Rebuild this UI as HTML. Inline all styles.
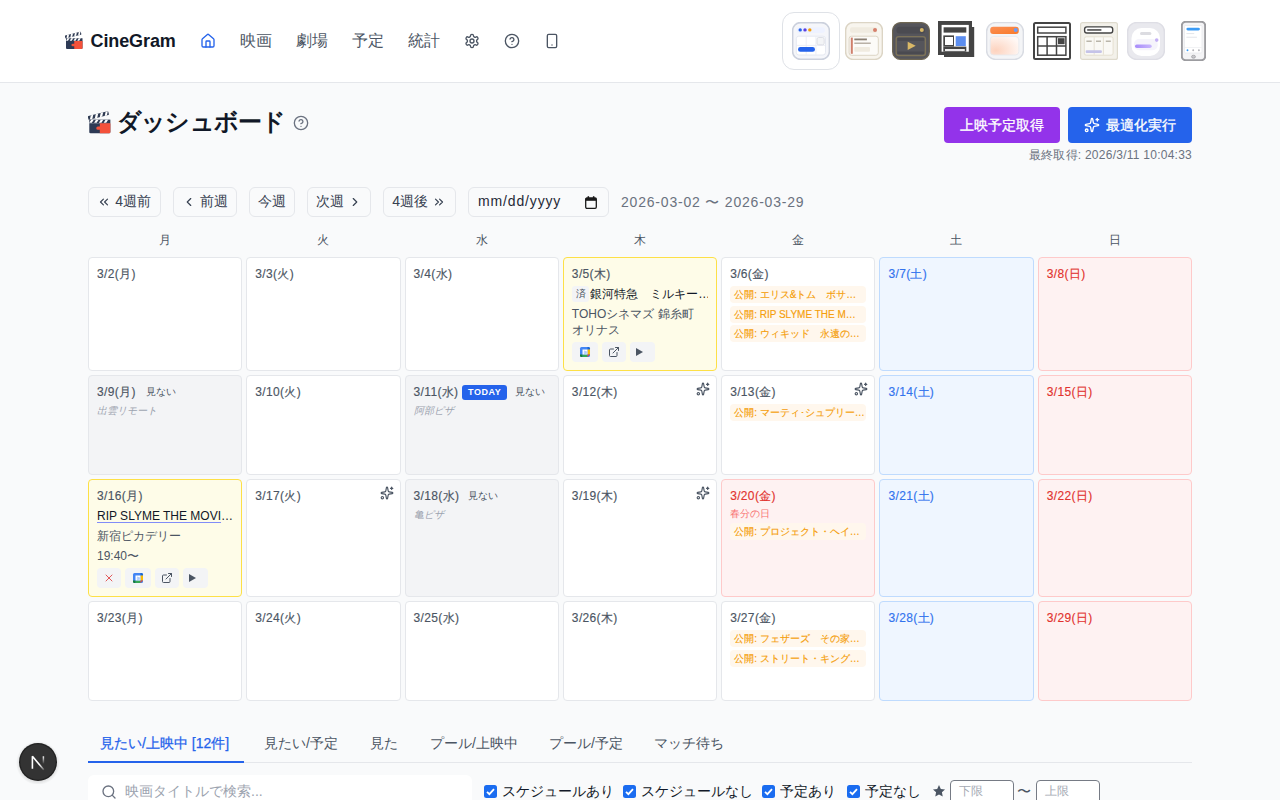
<!DOCTYPE html>
<html lang="ja">
<head>
<meta charset="utf-8">
<title>CineGram</title>
<style>
*{box-sizing:border-box;margin:0;padding:0}
html,body{width:1280px;height:800px;overflow:hidden}
body{font-family:"Liberation Sans",sans-serif;background:#f9fafb;color:#111827;position:relative;font-size:14px;line-height:1.5}
svg{display:block}
.ic{fill:none;stroke:currentColor;stroke-width:2;stroke-linecap:round;stroke-linejoin:round}
/* header */
#hdr{position:absolute;left:0;top:0;width:1280px;height:83px;background:#fff;border-bottom:1px solid #e5e7eb}
#logo{position:absolute;left:65px;top:27px;height:28px;display:flex;align-items:center;font-weight:700;font-size:18px;color:#111827;white-space:nowrap;letter-spacing:-.1px}
#logo svg{margin-right:7.500px}
#nav{position:absolute;left:200px;top:0;height:82px;display:flex;align-items:center;gap:24px;color:#4b5563;font-size:16px;white-space:nowrap}
#nav .act{color:#2563eb}
#nav span{width:32px;flex:none;overflow:visible}
#nav svg{flex:none}
.d span{flex:none;white-space:nowrap}
.th{position:absolute;top:22px;width:38px;height:38px}
#thsel{position:absolute;left:782px;top:12px;width:58px;height:58px;border:1px solid #dfe2e7;border-radius:12px;background:#fff}
/* title */
#ttl{position:absolute;left:87px;top:104px;height:36px;display:flex;align-items:center;font-size:24px;font-weight:700;color:#111827;white-space:nowrap;letter-spacing:-.8px}
#ttlhelp{position:absolute;left:293px;top:115px;color:#6b7280}
.btn{position:absolute;top:107px;height:36px;border-radius:4px;color:#fff;font-size:14px;-webkit-text-stroke:.3px #fff;display:flex;align-items:center;justify-content:center;white-space:nowrap}
#b1{left:944px;width:116px;background:#9333ea}
#b2{left:1068px;width:124px;background:#2563eb}
#b2 svg{margin-right:6px}
#last{position:absolute;right:88px;top:147px;font-size:12px;line-height:16px;color:#6b7280;white-space:nowrap;letter-spacing:.25px}
/* week nav */
.nb{position:absolute;top:187px;height:29.500px;border:1px solid #e5e7eb;border-radius:6px;color:#374151;font-size:14px;display:flex;align-items:center;justify-content:center;white-space:nowrap;gap:4px;padding:0 8px}
.nb svg{flex:none}
#range{position:absolute;left:621px;top:192px;font-size:14px;line-height:20px;color:#6b7280;white-space:nowrap;letter-spacing:.8px}
/* calendar */
.dow{position:absolute;top:231px;width:154px;text-align:center;font-size:12px;line-height:18px;color:#4b5563}
.c{position:absolute;border:1px solid #e5e7eb;border-radius:4px;background:#fff;padding:8px;overflow:hidden}
.c>*+*{margin-top:4px}
.c .d{font-size:12px;line-height:16px;height:16px;color:#4b5563;white-space:nowrap;display:flex;align-items:center;-webkit-text-stroke:.15px currentColor;letter-spacing:.35px}
.sat{background:#eff6ff;border-color:#bfdbfe}
.sat .d{color:#3173ee}
.sun{background:#fef2f2;border-color:#fecaca}
.sun .d{color:#e2332f}
.gry{background:#f3f4f6;border-color:#e5e7eb}
.yel{background:#fefce8;border-color:#fde047}
.c .sp{position:absolute;right:6px;top:6px;color:#4b5563;margin:0}
.rel{height:17px;border-radius:4px;background:#fff7ed;color:#f59e0b;font-size:10px;line-height:17px;padding:0 0 0 4px;white-space:nowrap;overflow:hidden;-webkit-text-stroke:.15px currentColor}
.c>.rel+.rel{margin-top:2.500px}
.nw{font-size:10px;color:#4b5563;margin-left:8px;-webkit-text-stroke:0;letter-spacing:0}
.today{margin-left:4px;background:#2563eb;color:#fff;font-size:9px;font-weight:700;line-height:15px;height:15px;padding:0 6px;border-radius:3px;letter-spacing:.6px;-webkit-text-stroke:0}
.memo{font-size:10px;line-height:14px;color:#9ca3af;font-style:italic;white-space:nowrap}
.hol{font-size:10px;line-height:14px;color:#f87171;white-space:nowrap}
.c>.hol{margin-top:3px}
.c>.hol+.rel{margin-top:2px}
.mv{font-size:12px;line-height:16px;color:#111827;white-space:nowrap;overflow:hidden}
.mv u{text-decoration-color:#818cf8;text-underline-offset:2px}
.sumi{display:inline-block;width:17.500px;height:15.500px;line-height:16px;margin-right:1px;border-radius:3px;background:#f3f4f6;color:#4b5563;font-size:10px;text-align:center;vertical-align:top}
.thr{font-size:12px;line-height:16px;color:#4b5563}
.acts{display:flex;gap:4px}
.ab{width:24px;height:20px;border-radius:4px;background:#f3f4f6;display:flex;align-items:center;justify-content:center;color:#4b5563}
/* tabs */
#tabs{position:absolute;left:88px;top:725px;width:1104px;height:38px;border-bottom:1px solid #e5e7eb;display:flex;font-size:14px;color:#4b5563;white-space:nowrap}
#tabs div{position:absolute;top:0;margin-left:-88px;padding:8px 0 0 12px;height:38px;line-height:20px}
#tabs .on{color:#2563eb;border-bottom:2px solid #2563eb;-webkit-text-stroke:.25px currentColor}
#search{position:absolute;left:88px;top:774.500px;width:384px;height:34px;background:#fff;border-radius:6px;color:#9ca3af;font-size:14px;display:flex;align-items:center;padding-left:12.500px;white-space:nowrap}
#search svg{margin-right:8.500px}
.ck{position:absolute;top:785px;width:13px;height:13px;border-radius:2.500px;background:#1a6cf0}
.cl{position:absolute;top:780.500px;font-size:14px;line-height:20px;color:#111827;white-space:nowrap}
.ni{position:absolute;top:780px;width:64px;height:24px;border:1px solid #767b85;border-radius:4px;background:#fff;font-size:12px;color:#a4a9b3;padding-left:7.500px;line-height:21px}
#ndev{position:absolute;left:16px;top:740px}
</style>
</head>
<body>
<svg width="0" height="0" style="position:absolute">
<defs>
<symbol id="clap" viewBox="0 0 36 36">
<g transform="rotate(-14 3 14)"><rect x="1" y="7.5" width="33" height="6" rx="1.2" fill="#2e3a52"/><path d="M6 7.5h4l-3 6h-4zM14 7.5h4l-3 6h-4zM22 7.5h4l-3 6h-4zM30 7.5h3.5l-3 6h-3.5z" fill="#fff"/></g>
<rect x="2" y="13.5" width="33" height="5.5" fill="#2e3a52"/>
<path d="M5 13.5h4l-3 5h-4zM12.5 13.5h4l-3 5h-4zM20 13.5h4l-3 5h-4zM27.500 13.5h4l-3 5h-4z" fill="#fff"/>
<path d="M2 19h33v14a2 2 0 0 1-2 2H4a2 2 0 0 1-2-2z" fill="#2d3a55"/>
<path d="M18.500 19H35v14a2 2 0 0 1-2 2H18.500v-5.500h-3a2.600 2.600 0 0 1 0-5.200h3z" fill="#f4513a"/>
</symbol>
<symbol id="i-home" viewBox="0 0 24 24"><path d="M15 21v-8a1 1 0 0 0-1-1h-4a1 1 0 0 0-1 1v8"/><path d="M3 10a2 2 0 0 1 .709-1.528l7-5.999a2 2 0 0 1 2.582 0l7 5.999A2 2 0 0 1 21 10v9a2 2 0 0 1-2 2H5a2 2 0 0 1-2-2z"/></symbol>
<symbol id="i-gear" viewBox="0 0 24 24"><path d="M12.220 2h-.440a2 2 0 0 0-2 2v.180a2 2 0 0 1-1 1.730l-.430.250a2 2 0 0 1-2 0l-.150-.080a2 2 0 0 0-2.730.730l-.220.380a2 2 0 0 0 .730 2.730l.150.100a2 2 0 0 1 1 1.720v.510a2 2 0 0 1-1 1.740l-.150.090a2 2 0 0 0-.730 2.730l.220.380a2 2 0 0 0 2.730.730l.150-.080a2 2 0 0 1 2 0l.430.250a2 2 0 0 1 1 1.730V20a2 2 0 0 0 2 2h.440a2 2 0 0 0 2-2v-.180a2 2 0 0 1 1-1.730l.430-.250a2 2 0 0 1 2 0l.150.080a2 2 0 0 0 2.730-.730l.220-.390a2 2 0 0 0-.730-2.730l-.150-.080a2 2 0 0 1-1-1.740v-.500a2 2 0 0 1 1-1.740l.150-.090a2 2 0 0 0 .730-2.730l-.220-.380a2 2 0 0 0-2.730-.730l-.150.080a2 2 0 0 1-2 0l-.430-.250a2 2 0 0 1-1-1.730V4a2 2 0 0 0-2-2z"/><circle cx="12" cy="12" r="3"/></symbol>
<symbol id="i-help" viewBox="0 0 24 24"><circle cx="12" cy="12" r="10"/><path d="M9.090 9a3 3 0 0 1 5.830 1c0 2-3 3-3 3"/><path d="M12 17h.010"/></symbol>
<symbol id="i-phone" viewBox="0 0 24 24"><rect width="14" height="20" x="5" y="2" rx="2" ry="2"/><path d="M12 18h.010"/></symbol>
<symbol id="i-spark" viewBox="0 0 24 24"><path d="M11.017 2.814a1 1 0 0 1 1.966 0l1.051 5.558a2 2 0 0 0 1.594 1.594l5.558 1.051a1 1 0 0 1 0 1.966l-5.558 1.051a2 2 0 0 0-1.594 1.594l-1.051 5.558a1 1 0 0 1-1.966 0l-1.051-5.558a2 2 0 0 0-1.594-1.594l-5.558-1.051a1 1 0 0 1 0-1.966l5.558-1.051a2 2 0 0 0 1.594-1.594z"/><path d="M20 2v4"/><path d="M22 4h-4"/><circle cx="4" cy="20" r="2"/></symbol>
<symbol id="i-ext" viewBox="0 0 24 24"><path d="M15 3h6v6"/><path d="M10 14 21 3"/><path d="M18 13v6a2 2 0 0 1-2 2H5a2 2 0 0 1-2-2V8a2 2 0 0 1 2-2h6"/></symbol>
<symbol id="i-x" viewBox="0 0 24 24"><path d="M18 6 6 18"/><path d="m6 6 12 12"/></symbol>
<symbol id="i-search" viewBox="0 0 24 24"><circle cx="11" cy="11" r="8"/><path d="m21 21-4.300-4.300"/></symbol>
<symbol id="i-cll" viewBox="0 0 24 24"><path d="m11 17-5-5 5-5"/><path d="m18 17-5-5 5-5"/></symbol>
<symbol id="i-cl" viewBox="0 0 24 24"><path d="m15 18-6-6 6-6"/></symbol>
<symbol id="i-cr" viewBox="0 0 24 24"><path d="m9 18 6-6-6-6"/></symbol>
<symbol id="i-crr" viewBox="0 0 24 24"><path d="m6 17 5-5-5-5"/><path d="m13 17 5-5-5-5"/></symbol>
<symbol id="gcal" viewBox="0 0 24 24"><rect x="2" y="2" width="20" height="20" rx="3" fill="#4285f4"/><path d="M17 2h2a3 3 0 0 1 3 3v2h-5z" fill="#1967d2"/><rect x="17" y="7" width="5" height="10" fill="#fbbc04"/><rect x="7" y="17" width="10" height="5" fill="#34a853"/><path d="M2 17h5v5H5a3 3 0 0 1-3-3z" fill="#188038"/><path d="M17 17h5l-5 5z" fill="#ea4335"/><rect x="7" y="7" width="10" height="10" fill="#fff"/><path d="M9.500 14.500c.5.700 1.100 1 1.800 1 1 0 1.700-.600 1.700-1.400 0-.800-.700-1.300-1.600-1.300M11.400 12.800c.800 0 1.400-.500 1.400-1.200 0-.700-.600-1.100-1.400-1.100-.700 0-1.200.300-1.600.800M14.500 10.500v5" stroke="#4285f4" stroke-width="1" fill="none"/></symbol>
</defs>
</svg>
<div id="hdr">
<div id="logo"><svg width="18" height="19" style="margin-top:-1px"><use href="#clap"/></svg>CineGram</div>
<div id="nav">
<svg class="ic act" width="16" height="16"><use href="#i-home"/></svg>
<span>映画</span><span>劇場</span><span>予定</span><span>統計</span>
<svg class="ic" width="16" height="16"><use href="#i-gear"/></svg>
<svg class="ic" width="16" height="16"><use href="#i-help"/></svg>
<svg class="ic" width="16" height="16"><use href="#i-phone"/></svg>
</div>
<div id="thsel"></div>
<svg class="th" style="left:792px" viewBox="0 0 38 38"><rect x=".6" y=".6" width="36.800" height="36.800" rx="8" fill="#f5f6fa" stroke="#cbd0dc" stroke-width="1.600"/><rect x="4.700" y="5.200" width="28.300" height="5.800" rx="2.900" fill="#eef2ff"/><circle cx="8.200" cy="7.900" r="1.700" fill="#2563eb"/><circle cx="13" cy="7.900" r="1.700" fill="#5b3fe0"/><circle cx="17.800" cy="7.900" r="1.700" fill="#f59e0b"/><rect x="4.300" y="14.200" width="29.200" height="18.800" rx="2.500" fill="#fff" stroke="#e3e6ef" stroke-width=".9"/><path d="M14.200 14.500v18.200M23.900 14.500v18.200M4.600 23.400h28.600" stroke="#e8eaf2" stroke-width=".8"/><rect x="25" y="15.500" width="7.200" height="7.300" rx="1.600" fill="#f3f4f6" stroke="#d5d8e0" stroke-width=".8"/><rect x="6" y="25" width="17" height="4.800" rx="2.400" fill="#2563eb"/></svg>
<svg class="th" style="left:845px" viewBox="0 0 38 38"><rect x=".6" y=".6" width="36.800" height="36.800" rx="7.500" fill="#f8f5ee" stroke="#dcd5c5" stroke-width="1.500"/><rect x="5" y="5.200" width="27" height="5.500" rx="2" fill="#f0ebe0"/><circle cx="30" cy="7.900" r="2" fill="#d6806c"/><rect x="4.100" y="14.200" width="29.200" height="19.100" rx="2.500" fill="#fcfbf8" stroke="#ddd6c6" stroke-width="1"/><rect x="5.800" y="15.600" width="2" height="16.200" fill="#cf7f6b"/><rect x="9.300" y="16.500" width="12.600" height="1.800" fill="#8a7f72"/><rect x="9.300" y="20.600" width="16.500" height="1.200" fill="#a89f92"/><rect x="9.300" y="25" width="15.700" height="4.800" rx="1" fill="#f0ebe0"/></svg>
<svg class="th" style="left:892px" viewBox="0 0 38 38"><rect x=".6" y=".6" width="36.800" height="36.800" rx="8" fill="#55555b" stroke="#6f6753" stroke-width="1.200"/><rect x="4.500" y="4.700" width="28.500" height="6.800" rx="3" fill="#4b4b51"/><circle cx="29.800" cy="8.100" r="2" fill="#d9b867"/><rect x="4.200" y="14.600" width="29.200" height="18.900" rx="2.500" fill="#55555b" stroke="#7d7358" stroke-width="1.400"/><rect x="5.500" y="16" width="26.600" height="2.800" fill="#4a4a50"/><rect x="5.500" y="29.500" width="26.600" height="2.600" fill="#4a4a50"/><path d="M15.700 19.700l8 4.100-8 4.100z" fill="#d9b867"/></svg>
<svg class="th" style="left:938px;top:21px" viewBox="0 0 38 38"><rect x="6" y="6" width="30.200" height="30" fill="#444"/><rect x="0" y="0" width="34" height="34" fill="#444"/><rect x="3.600" y="3.900" width="27.200" height="26.800" fill="#fff"/><rect x="5.600" y="6.300" width="22.700" height="5.300" fill="#444"/><rect x="5.300" y="14.400" width="10.700" height="11.200" fill="#444"/><rect x="7" y="16" width="8" height="8" fill="#fff"/><rect x="17.700" y="15.200" width="10.100" height="9.800" fill="#5b8def"/><rect x="5.300" y="25.600" width="23" height="5.100" fill="#444"/><rect x="7" y="28.100" width="19.800" height="1.800" fill="#fff"/></svg>
<svg class="th" style="left:986px" viewBox="0 0 38 38"><defs><linearGradient id="g5a" x1="0" y1="0" x2="1" y2="1"><stop offset="0" stop-color="#fb8f55"/><stop offset="1" stop-color="#f97a2a"/></linearGradient><radialGradient id="g5b" cx=".2" cy=".75" r=".9"><stop offset="0" stop-color="#fdd3bf"/><stop offset="1" stop-color="#fff8f5"/></radialGradient></defs><rect x=".6" y=".6" width="36.800" height="36.800" rx="9" fill="#f4f5f7" stroke="#d9dce3" stroke-width="1.500"/><rect x="4.200" y="4.800" width="28.600" height="7.100" rx="3" fill="url(#g5a)"/><circle cx="29.700" cy="7.900" r="2" fill="#6b9cf5"/><rect x="4.200" y="14.400" width="28.600" height="18.600" rx="3.500" fill="url(#g5b)" stroke="#e6e8ed" stroke-width=".8"/></svg>
<svg class="th" style="left:1033px" viewBox="0 0 38 38"><rect x="1" y="1" width="36" height="36" rx="1.500" fill="#fff" stroke="#444" stroke-width="2"/><rect x="4.700" y="5.200" width="28.200" height="5.800" fill="#fff" stroke="#444" stroke-width="1.500"/><rect x="4.700" y="14.700" width="28.200" height="18.500" fill="#fff" stroke="#444" stroke-width="1.500"/><path d="M14.100 14.700v18.500M23.500 14.700v18.500M4.700 24h28.200" stroke="#444" stroke-width="1.500"/><rect x="25" y="16.200" width="6.600" height="6" fill="#444"/></svg>
<svg class="th" style="left:1080px" viewBox="0 0 38 38"><rect x=".6" y=".6" width="36.800" height="36.800" rx="2" fill="#f3f1ea" stroke="#dedacd" stroke-width="1.200"/><rect x="4.600" y="4.900" width="28.100" height="6.100" rx="2.300" fill="#fff" stroke="#444" stroke-width="1.400"/><rect x="7.200" y="7.200" width="14.200" height="1.500" fill="#444"/><rect x="4.300" y="14.800" width="28.800" height="18.400" rx="2" fill="#faf9f5" stroke="#e4dfd0" stroke-width="1"/><path d="M14.200 15.300v17.400M23.400 15.300v17.400" stroke="#e0dbcc" stroke-width=".8"/><path d="M6.400 19.200h5.300M16 19.200h5M25.800 19.200h5" stroke="#bab6aa" stroke-width="1.500"/><rect x="5.700" y="28.200" width="16.200" height="2.700" rx="1" fill="#c5c3e8"/></svg>
<svg class="th" style="left:1127px" viewBox="0 0 38 38"><defs><linearGradient id="g8" x1="0" y1="0" x2="1" y2="0"><stop offset="0" stop-color="#a78bfa"/><stop offset="1" stop-color="#c9b8fc"/></linearGradient></defs><rect x=".6" y=".6" width="36.800" height="36.800" rx="9" fill="#e9e9ee" stroke="#dedee5" stroke-width="1.500"/><rect x="4.500" y="6" width="28.500" height="28" rx="10" fill="#fff"/><rect x="13" y="9.900" width="11.400" height="3" rx="1.500" fill="#dcdce1"/><rect x="7" y="17" width="23.700" height="11.200" rx="5" fill="#f5f4fb"/><rect x="8" y="22.500" width="16.700" height="3.500" rx="1.750" fill="url(#g8)"/><circle cx="29.700" cy="18.100" r="1.800" fill="#c4b0f5"/></svg>
<svg class="th" style="left:1180.500px;top:21px;width:25px;height:40px" viewBox="0 0 25 40"><rect x=".8" y=".8" width="23.400" height="38.400" rx="4" fill="#f4f4f6" stroke="#9c9ca0" stroke-width="2.100"/><rect x="3.500" y="4.500" width="17.500" height="27.500" rx="1" fill="#fff" stroke="#e5e7eb" stroke-width=".7"/><rect x="5.400" y="6.700" width="13.500" height="2.800" rx="1.400" fill="#3b9bf5"/><rect x="5.400" y="12" width="7.800" height="1.100" fill="#e5e7eb"/><rect x="5.400" y="15.700" width="10.500" height="1.100" fill="#e5e7eb"/><path d="M3.800 26.500h17" stroke="#eceef1" stroke-width=".7"/><circle cx="6.500" cy="29.250" r=".95" fill="#3b9bf5"/><circle cx="12.200" cy="29.250" r=".95" fill="#b4b4b9"/><circle cx="17.900" cy="29.250" r=".95" fill="#b4b4b9"/><ellipse cx="12.500" cy="35.700" rx="2" ry="1.500" fill="#c8c8cc" stroke="#9c9ca0" stroke-width=".7"/></svg>

</div>

<!--TITLE-->
<div id="ttl"><svg width="23" height="23" style="margin:0 6px 0 1px"><use href="#clap"/></svg>ダッシュボード</div>
<svg id="ttlhelp" class="ic" width="16" height="16"><use href="#i-help"/></svg>
<div class="btn" id="b1">上映予定取得</div>
<div class="btn" id="b2"><svg class="ic" width="16" height="16"><use href="#i-spark"/></svg>最適化実行</div>
<div id="last">最終取得: 2026/3/11 10:04:33</div>
<!--/TITLE-->
<!--WEEKNAV-->
<div class="nb" style="left:88px;width:72.500px"><svg class="ic" width="14" height="14"><use href="#i-cll"/></svg>4週前</div>
<div class="nb" style="left:173px;width:63.500px"><svg class="ic" width="14" height="14"><use href="#i-cl"/></svg>前週</div>
<div class="nb" style="left:249px;width:45.500px">今週</div>
<div class="nb" style="left:307px;width:63.500px">次週<svg class="ic" width="14" height="14"><use href="#i-cr"/></svg></div>
<div class="nb" style="left:383px;width:72.500px">4週後<svg class="ic" width="14" height="14"><use href="#i-crr"/></svg></div>
<div class="nb" id="dinp" style="left:468px;width:140.500px;justify-content:flex-start;padding-left:9px;color:#1f2937;letter-spacing:.85px">mm/dd/yyyy<svg width="12" height="13" viewBox="0 0 12 13" style="position:absolute;right:11px;top:7.500px"><rect x=".7" y="2" width="10.600" height="10.300" rx="1.200" fill="none" stroke="#1a1a1a" stroke-width="1.300"/><rect x=".7" y="2" width="10.600" height="2.800" fill="#1a1a1a"/><rect x="2.600" y=".2" width="1.500" height="2.500" fill="#1a1a1a"/><rect x="7.900" y=".2" width="1.500" height="2.500" fill="#1a1a1a"/></svg></div>
<div id="range">2026-03-02 〜 2026-03-29</div>
<!--/WEEKNAV-->
<!--CAL--><div class="dow" style="left:88.00px">月</div>
<div class="dow" style="left:246.29px">火</div>
<div class="dow" style="left:404.57px">水</div>
<div class="dow" style="left:562.86px">木</div>
<div class="dow" style="left:721.14px">金</div>
<div class="dow" style="left:879.43px">土</div>
<div class="dow" style="left:1037.71px">日</div>
<div class="c " style="left:88.00px;top:257px;width:154.29px;height:114px"><div class="d"><span>3/2(月)</span></div></div>
<div class="c " style="left:246.29px;top:257px;width:154.29px;height:114px"><div class="d"><span>3/3(火)</span></div></div>
<div class="c " style="left:404.57px;top:257px;width:154.29px;height:114px"><div class="d"><span>3/4(水)</span></div></div>
<div class="c yel" style="left:562.86px;top:257px;width:154.29px;height:114px"><div class="d"><span>3/5(木)</span></div><div class="mv"><span class="sumi">済</span>銀河特急　ミルキー…</div><div class="thr">TOHOシネマズ 錦糸町<br>オリナス</div><div class="acts"><div class="ab" style="width:26px"><svg width="12" height="12"><use href="#gcal"/></svg></div><div class="ab"><svg class="ic" width="12" height="12"><use href="#i-ext"/></svg></div><div class="ab" style="width:25px;justify-content:flex-start;padding-left:6px"><svg width="7" height="8" viewBox="0 0 7 8"><path d="M0 0l7 4-7 4z" fill="#4b5563"/></svg></div></div></div>
<div class="c " style="left:721.14px;top:257px;width:154.29px;height:114px"><div class="d"><span>3/6(金)</span></div><div class="rel">公開: エリス&amp;トム　ボサ…</div><div class="rel">公開: RIP SLYME THE M…</div><div class="rel">公開: ウィキッド　永遠の…</div></div>
<div class="c sat" style="left:879.43px;top:257px;width:154.29px;height:114px"><div class="d"><span>3/7(土)</span></div></div>
<div class="c sun" style="left:1037.71px;top:257px;width:154.29px;height:114px"><div class="d"><span>3/8(日)</span></div></div>
<div class="c gry" style="left:88.00px;top:375px;width:154.29px;height:100px"><div class="d"><span style="width:40.800px">3/9(月)</span><span class="nw">見ない</span></div><div class="memo">出雲リモート</div></div>
<div class="c " style="left:246.29px;top:375px;width:154.29px;height:100px"><div class="d"><span>3/10(火)</span></div></div>
<div class="c gry" style="left:404.57px;top:375px;width:154.29px;height:100px"><div class="d"><span style="width:44.400px">3/11(水)</span><span class="today">TODAY</span><span class="nw">見ない</span></div><div class="memo">阿部ピザ</div></div>
<div class="c " style="left:562.86px;top:375px;width:154.29px;height:100px"><div class="d"><span>3/12(木)</span></div><svg class="ic sp" width="14" height="14"><use href="#i-spark"/></svg></div>
<div class="c " style="left:721.14px;top:375px;width:154.29px;height:100px"><div class="d"><span>3/13(金)</span></div><svg class="ic sp" width="14" height="14"><use href="#i-spark"/></svg><div class="rel">公開: マーティ･シュプリー…</div></div>
<div class="c sat" style="left:879.43px;top:375px;width:154.29px;height:100px"><div class="d"><span>3/14(土)</span></div></div>
<div class="c sun" style="left:1037.71px;top:375px;width:154.29px;height:100px"><div class="d"><span>3/15(日)</span></div></div>
<div class="c yel" style="left:88.00px;top:479px;width:154.29px;height:118px"><div class="d"><span>3/16(月)</span></div><div class="mv"><u>RIP SLYME THE MOVI</u>…</div><div class="thr">新宿ピカデリー</div><div class="thr">19:40〜</div><div class="acts"><div class="ab"><svg class="ic" width="12" height="12" style="color:#dc2626;stroke-width:1.500"><use href="#i-x"/></svg></div><div class="ab" style="width:26px"><svg width="12" height="12"><use href="#gcal"/></svg></div><div class="ab"><svg class="ic" width="12" height="12"><use href="#i-ext"/></svg></div><div class="ab" style="width:25px;justify-content:flex-start;padding-left:6px"><svg width="7" height="8" viewBox="0 0 7 8"><path d="M0 0l7 4-7 4z" fill="#4b5563"/></svg></div></div></div>
<div class="c " style="left:246.29px;top:479px;width:154.29px;height:118px"><div class="d"><span>3/17(火)</span></div><svg class="ic sp" width="14" height="14"><use href="#i-spark"/></svg></div>
<div class="c gry" style="left:404.57px;top:479px;width:154.29px;height:118px"><div class="d"><span style="width:46.900px">3/18(水)</span><span class="nw">見ない</span></div><div class="memo">亀ピザ</div></div>
<div class="c " style="left:562.86px;top:479px;width:154.29px;height:118px"><div class="d"><span>3/19(木)</span></div><svg class="ic sp" width="14" height="14"><use href="#i-spark"/></svg></div>
<div class="c sun" style="left:721.14px;top:479px;width:154.29px;height:118px"><div class="d"><span>3/20(金)</span></div><div class="hol">春分の日</div><div class="rel">公開: プロジェクト・ヘイ…</div></div>
<div class="c sat" style="left:879.43px;top:479px;width:154.29px;height:118px"><div class="d"><span>3/21(土)</span></div></div>
<div class="c sun" style="left:1037.71px;top:479px;width:154.29px;height:118px"><div class="d"><span>3/22(日)</span></div></div>
<div class="c " style="left:88.00px;top:601px;width:154.29px;height:100px"><div class="d"><span>3/23(月)</span></div></div>
<div class="c " style="left:246.29px;top:601px;width:154.29px;height:100px"><div class="d"><span>3/24(火)</span></div></div>
<div class="c " style="left:404.57px;top:601px;width:154.29px;height:100px"><div class="d"><span>3/25(水)</span></div></div>
<div class="c " style="left:562.86px;top:601px;width:154.29px;height:100px"><div class="d"><span>3/26(木)</span></div></div>
<div class="c " style="left:721.14px;top:601px;width:154.29px;height:100px"><div class="d"><span>3/27(金)</span></div><div class="rel">公開: フェザーズ　その家…</div><div class="rel">公開: ストリート・キング…</div></div>
<div class="c sat" style="left:879.43px;top:601px;width:154.29px;height:100px"><div class="d"><span>3/28(土)</span></div></div>
<div class="c sun" style="left:1037.71px;top:601px;width:154.29px;height:100px"><div class="d"><span>3/29(日)</span></div></div>
<!--/CAL-->
<!--BOTTOM-->
<div id="tabs"><div class="on" style="left:88px;width:156px">見たい/上映中 [12件]</div><div class="" style="left:252px;width:98px">見たい/予定</div><div class="" style="left:358px;width:52px">見た</div><div class="" style="left:418px;width:111px">プール/上映中</div><div class="" style="left:537px;width:97px">プール/予定</div><div class="" style="left:642px;width:93px">マッチ待ち</div></div>
<div id="search"><svg class="ic" width="16" height="16" style="color:#6b7280"><use href="#i-search"/></svg>映画タイトルで検索...</div>
<div class="ck" style="left:484px"><svg width="13" height="13" viewBox="0 0 13 13"><path d="M3 6.800l2.400 2.400L10 4.200" fill="none" stroke="#fff" stroke-width="1.800"/></svg></div><div class="cl" style="left:501.5px">スケジュールあり</div>
<div class="ck" style="left:623px"><svg width="13" height="13" viewBox="0 0 13 13"><path d="M3 6.800l2.400 2.400L10 4.200" fill="none" stroke="#fff" stroke-width="1.800"/></svg></div><div class="cl" style="left:640.5px">スケジュールなし</div>
<div class="ck" style="left:762px"><svg width="13" height="13" viewBox="0 0 13 13"><path d="M3 6.800l2.400 2.400L10 4.200" fill="none" stroke="#fff" stroke-width="1.800"/></svg></div><div class="cl" style="left:780px">予定あり</div>
<div class="ck" style="left:847px"><svg width="13" height="13" viewBox="0 0 13 13"><path d="M3 6.800l2.400 2.400L10 4.200" fill="none" stroke="#fff" stroke-width="1.800"/></svg></div><div class="cl" style="left:865px">予定なし</div>
<svg style="position:absolute;left:932px;top:784px" width="14" height="14" viewBox="0 0 24 24"><path d="M12 1.800l3.100 6.600 7.200.9-5.300 5 1.400 7.200L12 18l-6.400 3.500L7 14.300l-5.300-5 7.200-.9z" fill="#4b5563"/></svg>
<div class="ni" style="left:950px">下限</div><div class="cl" style="left:1017px;color:#4b5563">〜</div><div class="ni" style="left:1036px">上限</div>
<svg id="ndev" width="44" height="44" viewBox="0 0 44 44"><defs><linearGradient id="ng1" gradientUnits="userSpaceOnUse" x1="16" y1="16" x2="28.500" y2="30"><stop offset=".6" stop-color="#fff"/><stop offset="1" stop-color="#fff" stop-opacity=".15"/></linearGradient><linearGradient id="ng2" gradientUnits="userSpaceOnUse" x1="0" y1="16" x2="0" y2="24"><stop offset="0" stop-color="#fff"/><stop offset="1" stop-color="#fff" stop-opacity="0"/></linearGradient><radialGradient id="ngs" cx=".5" cy=".5" r=".5"><stop offset=".8" stop-color="#000" stop-opacity=".12"/><stop offset="1" stop-color="#000" stop-opacity="0"/></radialGradient></defs><circle cx="22" cy="23" r="22" fill="url(#ngs)"/><circle cx="22" cy="22" r="19" fill="#222"/><circle cx="22" cy="22" r="17.700" fill="#333"/><path d="M16.400 28.700V16.300L27.800 29.800" fill="none" stroke="url(#ng1)" stroke-width="1.600" stroke-linejoin="bevel"/><path d="M27.400 16.300v7.500" fill="none" stroke="url(#ng2)" stroke-width="1.500"/></svg>
<!--/BOTTOM-->
</body>
</html>
